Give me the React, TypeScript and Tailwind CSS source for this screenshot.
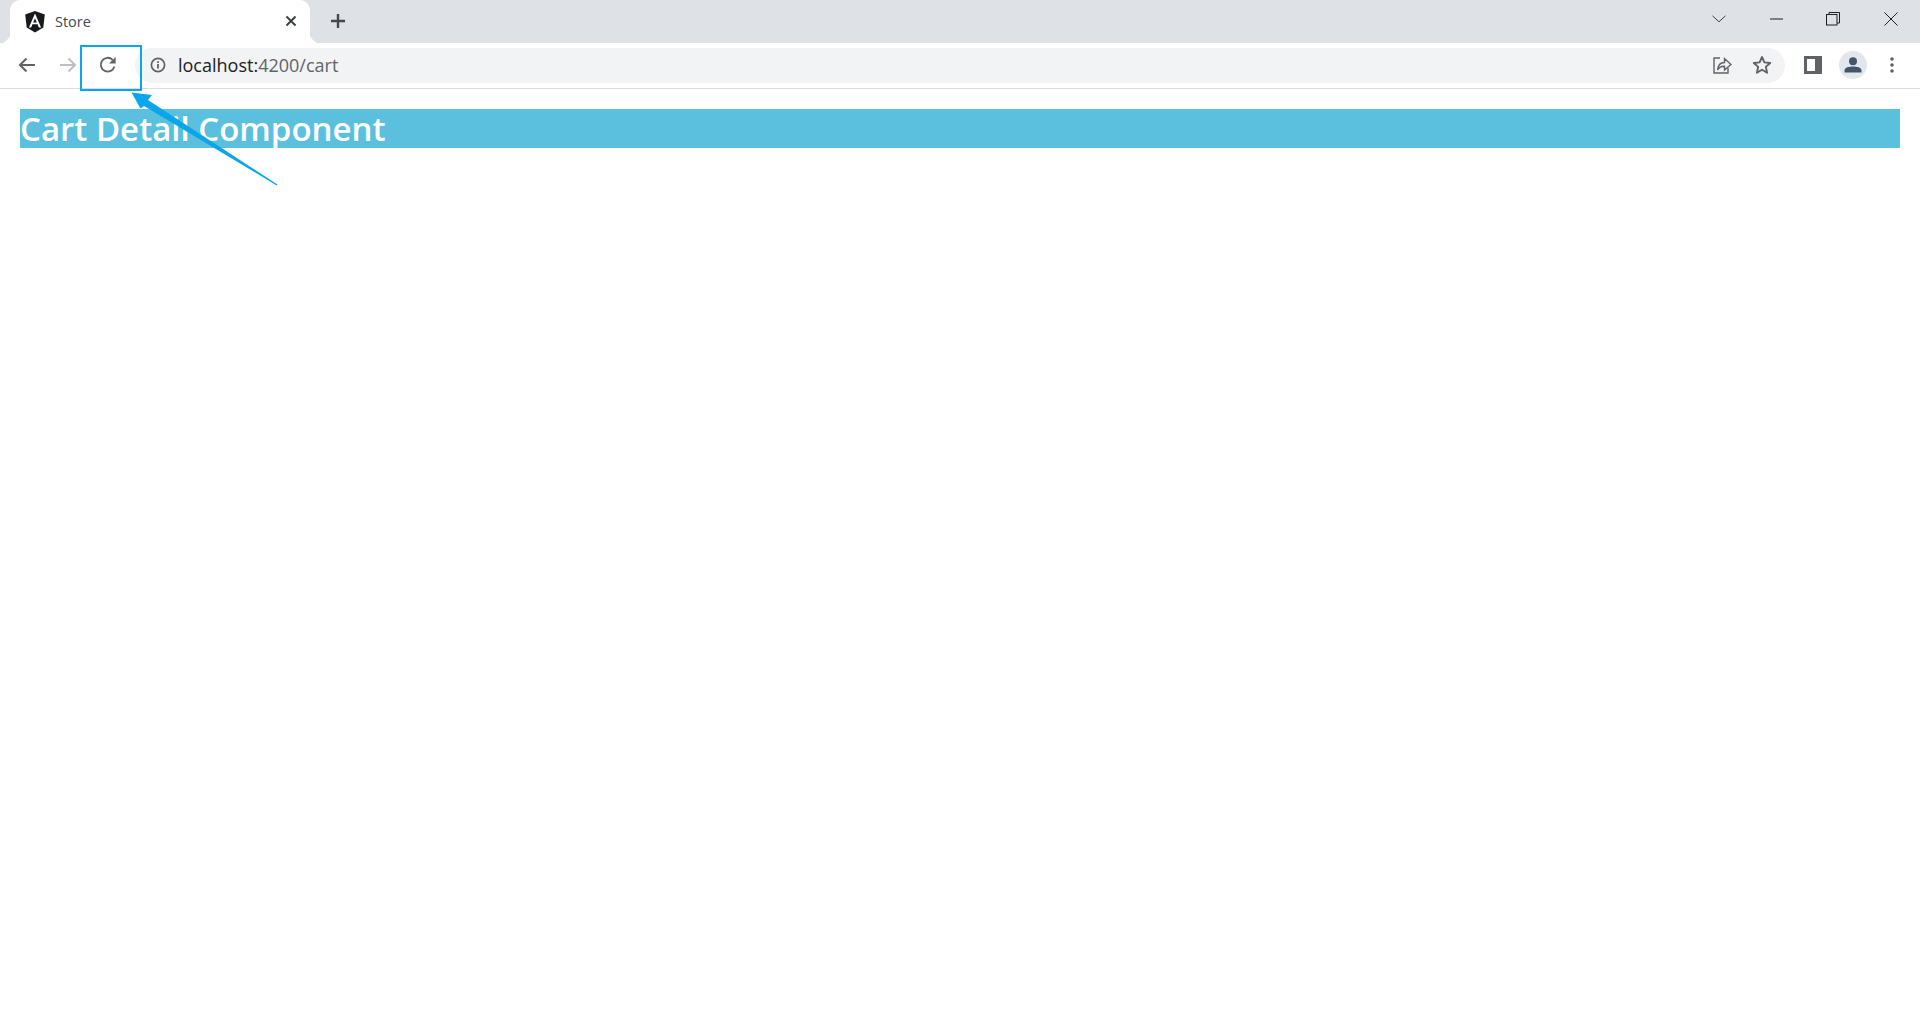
import React from "react";

const AngularLogo = () => (
  <svg width="20" height="22" viewBox="0 0 20 22" className="shrink-0">
    <path d="M10 0 L0.2 3.5 L1.7 16.6 L10 21.5 L18.3 16.6 L19.8 3.5 Z" fill="#17191c" />
    <path d="M10 2.6 L3.9 16.4 H6.2 L7.4 13.3 H12.6 L13.8 16.4 H16.1 Z M10 7.2 L11.8 11.4 H8.2 Z" fill="#ffffff" fillRule="evenodd" />
  </svg>
);

const WindowControls = () => (
  <div className="ml-auto flex items-center h-full pb-[5px]">
    <svg width="14" height="8" viewBox="0 0 14 8" className="mr-[44px]" fill="none" stroke="#3c4043" strokeWidth="1">
      <path d="M0.5 0.8 L7 6.8 L13.5 0.8" />
    </svg>
    <svg width="13" height="2" viewBox="0 0 13 2" className="mr-[43px]">
      <rect width="13" height="1" y="0.5" fill="#1f1f1f" />
    </svg>
    <svg width="14" height="14" viewBox="0 0 14 14" className="mr-[44px]" fill="none" stroke="#1f1f1f" strokeWidth="1">
      <rect x="0.5" y="2.5" width="10.5" height="10.5" />
      <path d="M3 2.5 V0.5 H13.5 V11 H11" />
    </svg>
    <svg width="14" height="14" viewBox="0 0 14 14" className="mr-[22px]" fill="none" stroke="#1f1f1f" strokeWidth="1">
      <path d="M0.5 0.5 L13.5 13.5 M13.5 0.5 L0.5 13.5" />
    </svg>
  </div>
);

const TabStrip = () => (
  <div className="flex h-[43px] bg-[#dee1e6] pl-[10px]">
    <div className="relative flex w-[300px] items-center rounded-t-[10px] bg-white pl-[15px] pr-[13px]">
      <span className="absolute bottom-0 left-[-10px] size-[10px] rounded-br-[10px] bg-[#dee1e6] shadow-[4px_4px_0_0_#ffffff]" />
      <span className="absolute bottom-0 right-[-10px] size-[10px] rounded-bl-[10px] bg-[#dee1e6] shadow-[-4px_4px_0_0_#ffffff]" />
      <AngularLogo />
      <span className="ml-[10px] text-[14.5px] text-[#45494e] font-['Open_Sans',sans-serif]">Store</span>
      <svg width="12" height="12" viewBox="0 0 12 12" className="ml-auto mb-[1px]" stroke="#3c4043" strokeWidth="2">
        <path d="M1.5 1.5 L10.5 10.5 M10.5 1.5 L1.5 10.5" />
      </svg>
    </div>
    <svg width="16" height="16" viewBox="0 0 16 16" className="ml-[20px] mt-[13px]" stroke="#45494e" strokeWidth="2.4">
      <path d="M8 1 V15 M1 8 H15" />
    </svg>
    <WindowControls />
  </div>
);

const Toolbar = () => (
  <div className="flex h-[46px] items-center border-b border-[#dadce0] bg-white pb-[1px]">
    <svg width="18" height="16" viewBox="0 0 18 16" className="ml-[18px]" fill="none" stroke="#5f6368" strokeWidth="2">
      <path d="M17 8 H2 M8.5 1.5 L2 8 L8.5 14.5" />
    </svg>
    <svg width="18" height="16" viewBox="0 0 18 16" className="ml-[23px]" fill="none" stroke="#bcbfc3" strokeWidth="2">
      <path d="M1 8 H16 M9.5 1.5 L16 8 L9.5 14.5" />
    </svg>
    <svg width="18" height="18" viewBox="0 0 18 18" className="ml-[22px] mb-[1px]" fill="none">
      <path d="M15.4 10.5 A6.9 6.9 0 1 1 13.6 3.8" stroke="#5f6368" strokeWidth="1.9" />
      <path d="M16.6 1 V7.6 H10 Z" fill="#5f6368" />
    </svg>
    <div className="ml-[18px] flex h-[35px] w-[1650px] items-center rounded-full bg-[#f1f3f4] pl-[15px] pr-[10px]">
      <svg width="16" height="16" viewBox="0 0 16 16" fill="none" className="shrink-0">
        <circle cx="8" cy="8" r="6.6" stroke="#5f6368" strokeWidth="1.7" />
        <rect x="7.1" y="7" width="1.8" height="4.6" fill="#5f6368" />
        <rect x="7.1" y="4.2" width="1.8" height="1.8" fill="#5f6368" />
      </svg>
      <span className="ml-[12px] text-[18px] leading-none font-['Open_Sans',sans-serif] text-[#5f6368]">
        <span className="text-[#202124]">localhost:</span>4200/cart
      </span>
      <svg width="20" height="20" viewBox="0 0 20 20" fill="none" stroke="#5f6368" strokeWidth="1.4" className="ml-auto">
        <path d="M8 3 H2 V18 H16 V13" />
        <path d="M5.5 15 C6 10 9 7.5 12.5 7.5 V3.5 L19 9.5 L12.5 15 V11.2 C9.5 11 7 12.5 5.5 15 Z" />
      </svg>
      <svg width="20" height="20" viewBox="0 0 20 20" fill="none" stroke="#5f6368" strokeWidth="1.9" className="ml-[20px] mr-[3px]">
        <path d="M10 2 L12.4 7.4 L18.2 8 L13.8 11.9 L15.1 17.7 L10 14.7 L4.9 17.7 L6.2 11.9 L1.8 8 L7.6 7.4 Z" strokeLinejoin="round" />
      </svg>
    </div>
    <svg width="18" height="18" viewBox="0 0 18 18" className="ml-[19px]">
      <path d="M0 0 H18 V18 H0 Z M3 3 V15 H11 V3 Z" fill="#5f6368" fillRule="evenodd" />
    </svg>
    <div className="ml-[17px] flex size-[28px] items-center justify-center rounded-full bg-[#e3e6ec]">
      <svg width="18" height="16" viewBox="0 0 18 16" fill="#44546a">
        <circle cx="9" cy="4.2" r="4" />
        <path d="M0.5 15.6 V13.5 C0.5 10.6 5 9.6 9 9.6 C13 9.6 17.5 10.6 17.5 13.5 V15.6 Z" />
      </svg>
    </div>
    <svg width="4" height="16" viewBox="0 0 4 16" className="ml-[23px]" fill="#5f6368">
      <circle cx="2" cy="2" r="1.8" />
      <circle cx="2" cy="8" r="1.8" />
      <circle cx="2" cy="14" r="1.8" />
    </svg>
  </div>
);

// screenshot annotation drawn on top of the browser window
const Annotation = () => (
  <>
    <div className="absolute left-[80px] top-[45px] h-[46px] w-[62px] border-2 border-[#0ba5ec]" />
    <svg width="300" height="200" viewBox="0 0 300 200" className="absolute left-0 top-0 pointer-events-none">
      <path d="M131.5 92.5 L152 95 L148 100 L277.5 184.5 L276.8 185.5 L144 106 L140.5 108.5 Z" fill="#0ba5ec" />
    </svg>
  </>
);

const App: React.FC = () => {
  return (
    <div className="relative min-h-[1027px] bg-white">
      <TabStrip />
      <Toolbar />
      <main className="px-5 pt-5">
        <h1 className="h-[39px] bg-[#5bc0de] text-[33px] leading-[39px] font-semibold text-white font-['Open_Sans',sans-serif]">
          Cart Detail Component
        </h1>
      </main>
      <Annotation />
    </div>
  );
};

export default App;
